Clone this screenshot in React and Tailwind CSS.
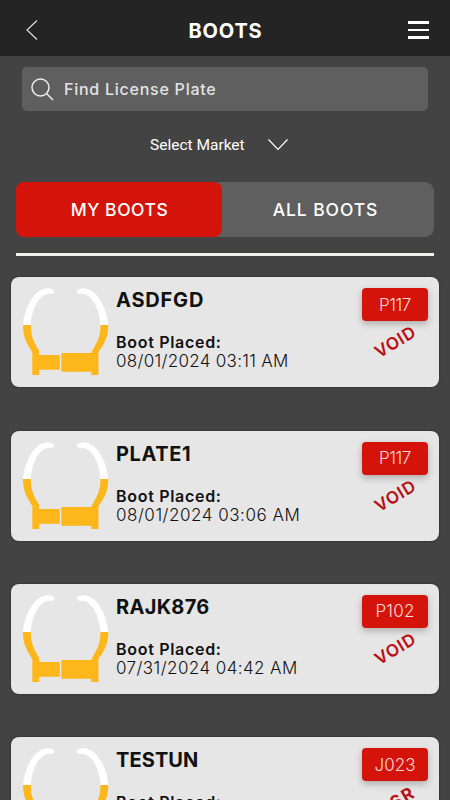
import React, { useState } from "react";

const boots = [
  { id: 1, plate: "ASDFGD", date: "08/01/2024 03:11 AM", code: "P117", status: "VOID", plateSpacing: "tracking-[0.8px]", dateSpacing: "tracking-[0.3px]", codeSpacing: "-tracking-[0.4px]" },
  { id: 2, plate: "PLATE1", date: "08/01/2024 03:06 AM", code: "P117", status: "VOID", plateSpacing: "tracking-[0.6px]", dateSpacing: "tracking-[0.52px]", codeSpacing: "-tracking-[0.4px]" },
  { id: 3, plate: "RAJK876", date: "07/31/2024 04:42 AM", code: "P102", status: "VOID", plateSpacing: "tracking-[0.3px]", dateSpacing: "tracking-[0.42px]", codeSpacing: "tracking-[0.2px]" },
  { id: 4, plate: "TESTUN", date: "07/31/2024 04:40 AM", code: "J023", status: "GSR", plateSpacing: "tracking-[0.1px]", dateSpacing: "tracking-[0.42px]", codeSpacing: "tracking-[0px]" },
];

function BootIcon() {
  return (
    <svg width="86" height="88" viewBox="0 0 86 88" className="block shrink-0">
      {/* Arms */}
      <path d="M0 37.500C1 21 11 0 25.500 0.300C29 0.500 31.500 2 31.300 4C31 5.500 29.500 6 27 5.800C15 6 8.500 23 7.800 37.500Z" fill="#fff" />
      <path d="M85.300 37.500C84.300 21 74.300 0 59.800 0.300C56.300 0.500 53.700 2 53.900 4C54.200 5.500 55.800 6 58.300 5.800C70.300 6 76.800 23 77.500 37.500Z" fill="#fff" />
      {/* Clamp */}
      <path d="M0 37H7.800C7.800 49 11 54 16 62.500L16.300 67H36.800V81.700H16.300V87H9.300V64C4 56 0 49 0 37Z" fill="#fdb71a" />
      <path d="M85.300 37H77.500C77.500 49 74.300 54 69.300 62.500L68.300 65H38.300V83.700H68.300V87H75.500V64C81.300 56 85.300 49 85.300 37Z" fill="#fdb71a" />
    </svg>
  );
}

function BootCard({ boot }) {
  return (
    <div className="flex h-[110px] shrink-0 rounded-lg bg-[#e6e6e6] pl-3 pr-[11px] text-[#111] shadow-[0_0_2px_#222]">
      <div className="pt-[11px]">
        <BootIcon />
      </div>

      <div className="ml-[7px] flex-1 whitespace-nowrap pt-[11px]">
        <h2 className={`text-[20px] font-bold leading-6 ${boot.plateSpacing}`}>{boot.plate}</h2>
        <p className="mt-[21px] text-[16px] font-semibold leading-[19px] tracking-[0.7px]">Boot Placed:</p>
        <p className={`text-[17px] font-light leading-[19px] ${boot.dateSpacing}`}>{boot.date}</p>
      </div>

      <div className="flex w-[66px] flex-col items-center pt-[11px]">
        <span className={`flex h-[33px] w-full shrink-0 items-center justify-center rounded bg-[#d4140b] pt-px text-[17px] font-light text-[#f5dcdc] shadow-[0_3px_7px_rgba(0,0,0,0.25)] ${boot.codeSpacing}`}>
          {boot.code}
        </span>
        <span className={`mt-[9px] -rotate-[31deg] text-[17px] leading-6 text-[#b90f12] ${boot.status === "VOID" ? "pl-px font-semibold tracking-[0.8px]" : "pl-[3px] font-bold tracking-[2px]"}`}>
          {boot.status}
        </span>
      </div>
    </div>
  );
}

function App() {
  const [tab, setTab] = useState("my");

  return (
    <div className="flex h-[800px] w-[450px] flex-col overflow-hidden bg-[#434343] font-['Inter',sans-serif] text-white">

      {/* Header */}
      <header className="flex h-14 shrink-0 items-center justify-between bg-[#242424] pl-[26px] pr-[21px] pt-1">
        <button type="button" aria-label="Back">
          <svg width="12" height="20" viewBox="0 0 12 20" fill="none" stroke="#ddd" strokeWidth="1.200">
            <path d="M11 0.500L1 10L11 19.500" />
          </svg>
        </button>
        <h1 className="ml-[5px] pt-px text-[20px] font-bold tracking-[0.8px]">BOOTS</h1>
        <button type="button" aria-label="Menu" className="flex w-[21px] flex-col gap-[5px]">
          <span className="h-[2.500px] bg-white" />
          <span className="h-[2.500px] bg-white" />
          <span className="h-[2.500px] bg-white" />
        </button>
      </header>

      {/* Search */}
      <div className="mx-[22px] mt-[11px] flex h-11 shrink-0 items-center gap-[10px] rounded-[5px] bg-[#5f5f5f] pl-[9px]">
        <svg width="23" height="23" viewBox="0 0 23 23" fill="none" stroke="#eee" strokeWidth="1.500">
          <circle cx="9.500" cy="9.500" r="8.500" />
          <path d="M15.500 15.500L22 22" />
        </svg>
        <span className="text-[16px] font-medium tracking-[0.75px] text-[#e4e4e4]">Find License Plate</span>
      </div>

      {/* Market */}
      <div className="ml-[150px] mt-[22px] flex h-6 shrink-0 items-center gap-[23px]">
        <span className="w-[95px] whitespace-nowrap pt-px font-['Roboto',sans-serif] text-[15.500px]">Select Market</span>
        <svg width="20" height="12" viewBox="0 0 20 12" fill="none" stroke="#fff" strokeWidth="1.200">
          <path d="M0.500 0.500L10 10.500L19.500 0.500" />
        </svg>
      </div>

      {/* Tabs */}
      <div className="ml-4 mt-[25px] flex h-[55px] w-[418px] shrink-0 rounded-[9px] bg-[#5f5f5f] text-[17.500px] font-medium tracking-[0.55px]">
        <button type="button" onClick={() => setTab("my")} className={`w-[206px] rounded-lg pl-px pt-[2px] ${tab === "my" ? "bg-[#d4140b]" : ""}`}>
          MY BOOTS
        </button>
        <button type="button" onClick={() => setTab("all")} className={`flex-1 rounded-lg pr-[5px] pt-[2px] tracking-[0.9px] ${tab === "all" ? "bg-[#d4140b]" : ""}`}>
          ALL BOOTS
        </button>
      </div>

      <hr className="ml-4 mt-4 h-[2.500px] w-[418px] shrink-0 border-0 bg-[#f0f0ee]" />

      {/* Boot list */}
      <main className="mx-[11px] mt-[21.900px] flex flex-col gap-[43.300px]">
        {boots.map((boot) => (
          <BootCard key={boot.id} boot={boot} />
        ))}
      </main>
    </div>
  );
}

export default App;
